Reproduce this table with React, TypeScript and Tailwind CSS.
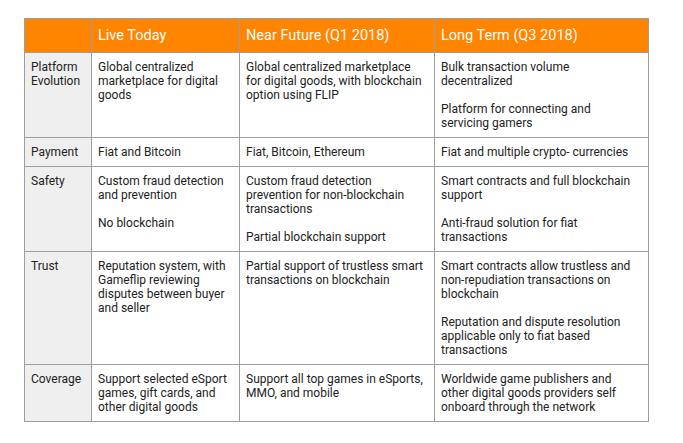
const headers = ['Live Today', 'Near Future (Q1 2018)', 'Long Term (Q3 2018)']

const rows: { label: string; cells: string[][] }[] = [
  {
    label: 'Platform Evolution',
    cells: [
      ['Global centralized marketplace for digital goods'],
      ['Global centralized marketplace for digital goods, with blockchain option using FLIP'],
      ['Bulk transaction volume decentralized', 'Platform for connecting and servicing gamers'],
    ],
  },
  {
    label: 'Payment',
    cells: [['Fiat and Bitcoin'], ['Fiat, Bitcoin, Ethereum'], ['Fiat and multiple crypto- currencies']],
  },
  {
    label: 'Safety',
    cells: [
      ['Custom fraud detection and prevention', 'No blockchain'],
      ['Custom fraud detection prevention for non-blockchain transactions', 'Partial blockchain support'],
      ['Smart contracts and full blockchain support', 'Anti-fraud solution for fiat transactions'],
    ],
  },
  {
    label: 'Trust',
    cells: [
      ['Reputation system, with Gameflip reviewing disputes between buyer and seller'],
      ['Partial support of trustless smart transactions on blockchain'],
      [
        'Smart contracts allow trustless and non-repudiation transactions on blockchain',
        'Reputation and dispute resolution applicable only to fiat based transactions',
      ],
    ],
  },
  {
    label: 'Coverage',
    cells: [
      ['Support selected eSport games, gift cards, and other digital goods'],
      ['Support all top games in eSports, MMO, and mobile'],
      ['Worldwide game publishers and other digital goods providers self onboard through the network'],
    ],
  },
]

export default function App() {
  return (
    <div className="w-[683px] h-[443px] bg-white pt-[18px] pl-[24px] font-['Roboto','Liberation_Sans',sans-serif] text-[#222222]">
      <table className="table-fixed border-collapse w-[624px]">
        <colgroup>
          <col className="w-[67px]" />
          <col className="w-[148px]" />
          <col className="w-[195px]" />
          <col className="w-[214px]" />
        </colgroup>
        <thead>
          <tr className="bg-[#ff8400] h-[34px]">
            <th className="border border-[#9e9e9e]" />
            {headers.map(h => (
              <th
                key={h}
                className="border border-[#9e9e9e] px-[6px] text-left align-middle text-[14.5px] font-normal leading-[20px] text-white"
              >
                {h}
              </th>
            ))}
          </tr>
        </thead>
        <tbody>
          {rows.map(r => (
            <tr key={r.label}>
              <td className="border border-[#9e9e9e] bg-[#efefef] px-[6px] py-[7px] align-top text-[12px] leading-[14px]">
                {r.label}
              </td>
              {r.cells.map((c, i) => (
                <td
                  key={i}
                  className={`border border-[#9e9e9e] pl-[6px] py-[7px] align-top text-[12px] leading-[14px] ${i === 2 ? 'pr-[12px]' : 'pr-[6px]'}`}
                >
                  {c.map((p, j) => (
                    <p key={j} className={j > 0 ? 'mt-[14px]' : ''}>
                      {p}
                    </p>
                  ))}
                </td>
              ))}
            </tr>
          ))}
        </tbody>
      </table>
    </div>
  )
}
